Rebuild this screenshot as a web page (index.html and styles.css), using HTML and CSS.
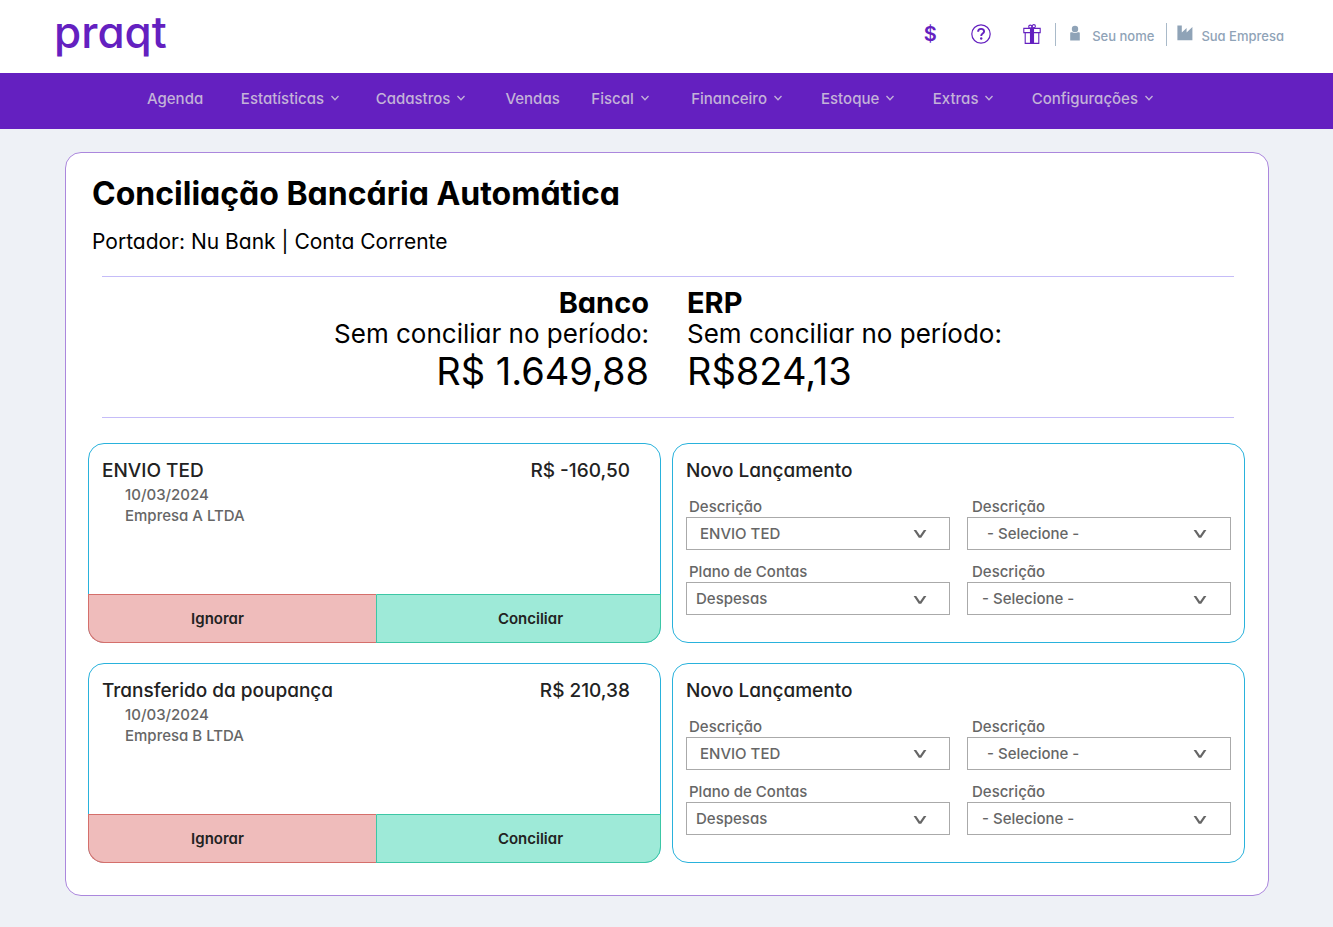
FILE: index.html
```html
<!DOCTYPE html>
<html lang="pt-BR">
<head>
<meta charset="utf-8">
<meta name="viewport" content="width=device-width, initial-scale=1">
<title>Conciliação Bancária Automática</title>
<link rel="stylesheet" href="styles.css">
</head>
<body>
<svg class="sprite" aria-hidden="true">
  <symbol id="chevron" viewBox="0 0 10 8"><path d="M1.500 2l3.500 3.800L8.500 2" fill="none" stroke="currentColor" stroke-width="1.300"/></symbol>
  <symbol id="arrow" viewBox="0 0 14 10"><path d="M.6 1h2.600L7 6.600 10.800 1h2.600L8.200 8.800H5.800z" fill="currentColor"/></symbol>
</svg>
<header class="topbar">
  <a class="logo" href="#">praqt</a>
  <div class="tools">
    <a class="tool tool-money" href="#" aria-label="Planos">$</a>
    <a class="tool" href="#" aria-label="Ajuda">
      <svg width="20" height="20" viewBox="0 0 20 20" fill="none" stroke="currentColor"><circle cx="10" cy="10" r="9.200" stroke-width="1.200"/><path d="M7.100 7.800c0-1.800 1.200-2.900 3-2.900s3 1.100 3 2.600c0 2.100-2.900 2.100-2.900 4.400" stroke-width="1.900"/><circle cx="10.200" cy="14.500" r="1.200" fill="currentColor" stroke="none"/></svg>
    </a>
    <a class="tool" href="#" aria-label="Presentes">
      <svg width="18" height="20" viewBox="0 0 18 20" fill="none" stroke="currentColor" stroke-width="1.100"><path d="M.8 4.400h16.400v4.200H.8zM2.200 8.600h13.600v10.800H2.200z"/><path d="M7.500 4.400h3v15h-3z" fill="currentColor"/><circle cx="7.300" cy="2.700" r="1.600"/><circle cx="10.800" cy="2.200" r="1.600"/></svg>
    </a>
    <a class="account" href="#">
      <svg class="account-icon" width="10" height="16" viewBox="0 0 10 16" fill="currentColor"><circle cx="5" cy="4" r="3.200"/><path d="M.2 8q0-.8.800-.8h1.200q2.800 1.600 5.600 0H9q.8 0 .8.800v7.400H.2z"/></svg>
      Seu nome
    </a>
    <a class="account" href="#">
      <svg class="account-icon" width="16" height="16" viewBox="0 0 16 16" fill="currentColor"><path d="M.4 15.200V.4h4.400v7.200L9.600 3v4.400L15.400 2v13.200z"/></svg>
      Sua Empresa
    </a>
  </div>
</header>
<nav class="menu">
  <a href="#">Agenda</a>
  <a href="#">Estatísticas<svg class="chevron"><use href="#chevron"/></svg></a>
  <a href="#">Cadastros<svg class="chevron"><use href="#chevron"/></svg></a>
  <a href="#">Vendas</a>
  <a href="#">Fiscal<svg class="chevron"><use href="#chevron"/></svg></a>
  <a href="#">Financeiro<svg class="chevron"><use href="#chevron"/></svg></a>
  <a href="#">Estoque<svg class="chevron"><use href="#chevron"/></svg></a>
  <a href="#">Extras<svg class="chevron"><use href="#chevron"/></svg></a>
  <a href="#">Configurações<svg class="chevron"><use href="#chevron"/></svg></a>
</nav>
<main class="page">
  <section class="card">
    <h1 class="title">Conciliação Bancária Automática</h1>
    <p class="subtitle">Portador: Nu Bank | Conta Corrente</p>
    <div class="balances">
      <div class="balance balance-bank">
        <h2 class="balance-name">Banco</h2>
        <p class="balance-label">Sem conciliar no período:</p>
        <p class="balance-value">R$ 1.649,88</p>
      </div>
      <div class="balance">
        <h2 class="balance-name">ERP</h2>
        <p class="balance-label">Sem conciliar no período:</p>
        <p class="balance-value">R$824,13</p>
      </div>
    </div>
    <div class="entries">
      <article class="panel">
        <div class="entry">
          <div class="entry-head"><h3 class="panel-title">ENVIO TED</h3><span class="panel-title">R$ -160,50</span></div>
          <p class="entry-detail">10/03/2024</p>
          <p class="entry-detail">Empresa A LTDA</p>
        </div>
        <div class="actions">
          <button class="action action-ignore" type="button">Ignorar</button>
          <button class="action action-match" type="button">Conciliar</button>
        </div>
      </article>
      <form class="panel launch">
        <h3 class="panel-title">Novo Lançamento</h3>
        <div class="fields">
          <div class="field"><label for="a1">Descrição</label><div class="pick"><select id="a1"><option>ENVIO TED</option></select><svg class="arrow"><use href="#arrow"/></svg></div></div>
          <div class="field field-side"><label for="a2">Descrição</label><div class="pick"><select id="a2"><option>- Selecione -</option></select><svg class="arrow"><use href="#arrow"/></svg></div></div>
          <div class="field field-lower"><label for="a3">Plano de Contas</label><div class="pick"><select id="a3"><option>Despesas</option></select><svg class="arrow"><use href="#arrow"/></svg></div></div>
          <div class="field field-side field-lower"><label for="a4">Descrição</label><div class="pick"><select id="a4"><option>- Selecione -</option></select><svg class="arrow"><use href="#arrow"/></svg></div></div>
        </div>
      </form>
      <article class="panel">
        <div class="entry">
          <div class="entry-head"><h3 class="panel-title">Transferido da poupança</h3><span class="panel-title">R$ 210,38</span></div>
          <p class="entry-detail">10/03/2024</p>
          <p class="entry-detail">Empresa B LTDA</p>
        </div>
        <div class="actions">
          <button class="action action-ignore" type="button">Ignorar</button>
          <button class="action action-match" type="button">Conciliar</button>
        </div>
      </article>
      <form class="panel launch">
        <h3 class="panel-title">Novo Lançamento</h3>
        <div class="fields">
          <div class="field"><label for="b1">Descrição</label><div class="pick"><select id="b1"><option>ENVIO TED</option></select><svg class="arrow"><use href="#arrow"/></svg></div></div>
          <div class="field field-side"><label for="b2">Descrição</label><div class="pick"><select id="b2"><option>- Selecione -</option></select><svg class="arrow"><use href="#arrow"/></svg></div></div>
          <div class="field field-lower"><label for="b3">Plano de Contas</label><div class="pick"><select id="b3"><option>Despesas</option></select><svg class="arrow"><use href="#arrow"/></svg></div></div>
          <div class="field field-side field-lower"><label for="b4">Descrição</label><div class="pick"><select id="b4"><option>- Selecione -</option></select><svg class="arrow"><use href="#arrow"/></svg></div></div>
        </div>
      </form>
    </div>
  </section>
</main>
</body>
</html>
```

FILE: styles.css
```css
* { box-sizing: border-box; }

body {
  margin: 0;
  background: #eef1f6;
  color: #000;
  font-family: Inter, "Noto Sans", sans-serif;
  font-feature-settings: "cv11";
}

h1, h2, h3, p { margin: 0; }
a { color: inherit; text-decoration: none; }
button, select { font: inherit; font-feature-settings: inherit; }

.sprite { display: block; width: 0; height: 0; }

.topbar {
  display: flex;
  align-items: center;
  justify-content: space-between;
  height: 73px;
  padding: 0 49px 4px 54px;
  background: #fff;
}

.logo {
  padding-bottom: 5px;
  color: #6420c0;
  font-size: 44px;
  font-weight: 500;
  line-height: 60px;
}

.tools {
  display: flex;
  align-items: center;
  color: #6420c0;
}

.tool {
  display: flex;
  justify-content: center;
  width: 20px;
  margin-right: 31px;
  padding-bottom: 2px;
}

.tool:nth-child(3) { margin-right: 13px; }

.tool-money {
  font-size: 20px;
  font-weight: 600;
}

.account {
  display: flex;
  align-items: center;
  gap: 12px;
  height: 23px;
  padding: 2px 0 0 14px;
  border-left: 1px solid #a9bac9;
  color: #8fa3b7;
  font-size: 13px;
  font-weight: 500;
}

.account + .account {
  gap: 8px;
  margin-left: 12px;
  padding-left: 10px;
}

.account-icon { margin-bottom: 6px; }

.menu {
  display: grid;
  grid-template-columns: 94fr 135fr 130fr 86fr 100fr 130fr 112fr 99fr 121fr;
  height: 56px;
  padding: 0 179px 6px 147px;
  background: #6420c0;
  color: #c3b2d8;
  font-size: 15px;
  font-weight: 500;
}

.menu a {
  display: flex;
  align-items: center;
  gap: 6px;
  white-space: nowrap;
}

.chevron {
  flex: none;
  width: 10px;
  height: 8px;
}

.page { padding: 23px 64px 31px 65px; }

.card {
  padding: 21px 23px 32px 22px;
  border: 1px solid #ab87dd;
  border-radius: 16px;
  background: #fff;
}

.title {
  padding-left: 4px;
  font-size: 32px;
  font-weight: 700;
  line-height: 40px;
}

.subtitle {
  padding: 13px 0 19px 4px;
  font-size: 21px;
  line-height: 30px;
}

.balances {
  display: grid;
  grid-template-columns: 1fr 1fr;
  gap: 38px;
  margin: 0 11px 25px 14px;
  padding: 9px 0 23px;
  border: solid #c5bcf8;
  border-width: 1px 0;
}

.balance-bank { text-align: right; }

.balance-name {
  font-size: 29px;
  font-weight: 700;
  line-height: 34px;
}

.balance-label {
  font-size: 26px;
  line-height: 28px;
}

.balance-value {
  font-size: 38px;
  line-height: 46px;
}

.entries {
  display: grid;
  grid-template-columns: 1fr 1fr;
  gap: 20px 11px;
}

.panel {
  display: flex;
  flex-direction: column;
  min-height: 200px;
  border: 1px solid #29b2dc;
  border-radius: 16px;
  background: #fff;
}

.panel-title {
  color: #222;
  font-size: 19px;
  font-weight: 500;
  line-height: 26px;
}

.entry {
  flex: 1;
  padding: 14px 30px 13px 13px;
}

.entry-head {
  display: flex;
  justify-content: space-between;
}

.entry-detail {
  padding-left: 23px;
  color: #666;
  font-size: 15px;
  font-weight: 500;
  line-height: 21px;
}

.actions {
  display: grid;
  grid-template-columns: 288fr 285fr;
  margin: 0 -1px -1px;
}

.action {
  height: 49px;
  border: 1px solid;
  color: #222;
  font-size: 15px;
  font-weight: 600;
}

.action-ignore {
  padding: 0 30px 0 0;
  border-color: #d46f6b;
  border-right-width: 0;
  border-bottom-left-radius: 16px;
  background: #efbcbb;
}

.action-match {
  padding: 0 0 0 24px;
  border-color: #3cc7a5;
  border-bottom-right-radius: 16px;
  background: #9eead8;
}

.launch { padding: 14px 13px 27px; }

.fields {
  display: grid;
  grid-template-columns: 1fr 1fr;
  gap: 11px 17px;
  padding-top: 12px;
  color: #666;
  font-size: 15px;
  font-weight: 500;
}

.field label {
  display: block;
  padding-left: 3px;
  line-height: 21px;
}

.field-side label { padding-left: 5px; }

.pick {
  display: grid;
  align-items: center;
}

.pick select, .arrow { grid-area: 1 / 1; }

.pick select {
  width: 100%;
  height: 33px;
  padding: 0 40px 0 13px;
  border: 1px solid #aaa;
  border-radius: 0;
  background: #fff;
  color: #666;
  appearance: none;
}

.field-side select { padding-left: 19px; }
.field-lower select { padding-left: 9px; }
.field-side.field-lower select { padding-left: 14px; }

.arrow {
  justify-self: end;
  width: 14px;
  height: 10px;
  margin-right: 23px;
  pointer-events: none;
}

.field-side .arrow { margin-right: 24px; }
.field-lower .arrow { margin-top: 3px; }
```
